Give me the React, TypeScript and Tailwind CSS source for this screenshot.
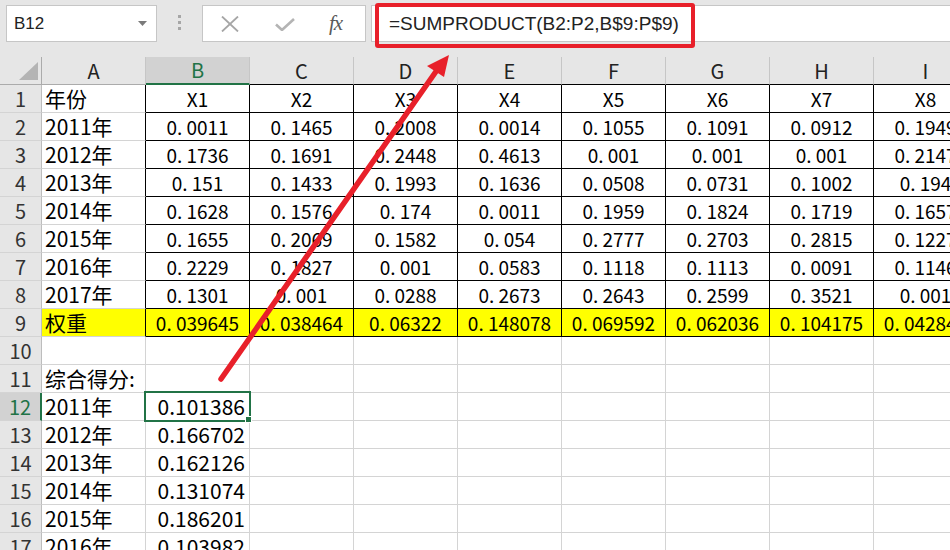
import React from "react";

const COLS = ["A", "B", "C", "D", "E", "F", "G", "H", "I"];

const ROWS: string[][] = [
  ["年份", "X1", "X2", "X3", "X4", "X5", "X6", "X7", "X8"],
  ["2011年", "0.0011", "0.1465", "0.2008", "0.0014", "0.1055", "0.1091", "0.0912", "0.1949"],
  ["2012年", "0.1736", "0.1691", "0.2448", "0.4613", "0.001", "0.001", "0.001", "0.2147"],
  ["2013年", "0.151", "0.1433", "0.1993", "0.1636", "0.0508", "0.0731", "0.1002", "0.194"],
  ["2014年", "0.1628", "0.1576", "0.174", "0.0011", "0.1959", "0.1824", "0.1719", "0.1657"],
  ["2015年", "0.1655", "0.2069", "0.1582", "0.054", "0.2777", "0.2703", "0.2815", "0.1227"],
  ["2016年", "0.2229", "0.1827", "0.001", "0.0583", "0.1118", "0.1113", "0.0091", "0.1146"],
  ["2017年", "0.1301", "0.001", "0.0288", "0.2673", "0.2643", "0.2599", "0.3521", "0.001"],
  ["权重", "0.039645", "0.038464", "0.06322", "0.148078", "0.069592", "0.062036", "0.104175", "0.042848"],
  ["", "", "", "", "", "", "", "", ""],
  ["综合得分:", "", "", "", "", "", "", "", ""],
  ["2011年", "0.101386", "", "", "", "", "", "", ""],
  ["2012年", "0.166702", "", "", "", "", "", "", ""],
  ["2013年", "0.162126", "", "", "", "", "", "", ""],
  ["2014年", "0.131074", "", "", "", "", "", "", ""],
  ["2015年", "0.186201", "", "", "", "", "", "", ""],
  ["2016年", "0.103982", "", "", "", "", "", "", ""],
];

function Wide({ v }: { v: string }) {
  const i = v.indexOf(".");
  if (i < 0) return <>{v}</>;
  return (
    <>
      {v.slice(0, i)}
      <span className="inline-block w-[0.5em]">.</span>
      {v.slice(i + 1)}
    </>
  );
}

function cellClass(r: number, c: number): string {
  const inTable = r >= 1 && r <= 9 && c >= 1;
  const yellow = r === 9;
  let cls = "w-[104px] h-[28px] shrink-0 flex items-center border-r border-b ";
  if (inTable) {
    cls += "border-black justify-center text-[19px] ";
  } else if (c === 0 && r >= 1 && r <= 9) {
    cls += "border-r-black border-b-[#d4d4d4] justify-start pl-[3px] text-[21px] ";
  } else if (c === 0) {
    cls += "border-[#d4d4d4] justify-start pl-[3px] text-[21px] ";
  } else {
    cls += "border-[#d4d4d4] justify-end pr-[4px] text-[21px] ";
  }
  cls += yellow ? "bg-[#ffff00]" : "bg-white";
  return cls;
}

export default function App() {
  return (
    <div className="relative w-[950px] h-[550px] overflow-hidden bg-white text-black font-['Noto_Sans_CJK_SC',sans-serif]">
      {/* Top formula area */}
      <div className="h-[57px] bg-[#e6e6e6] flex items-start pt-[5px]">
        <div className="ml-[6px] w-[151px] h-[37px] bg-white border border-[#c6c6c6] flex items-center justify-between pl-[7px] pr-[9px]">
          <span className="text-[17px] leading-none text-[#222] font-['Liberation_Sans',sans-serif]">B12</span>
          <svg width="9" height="5" viewBox="0 0 9 5">
            <polygon points="0,0 9,0 4.5,5" fill="#7a7a7a" />
          </svg>
        </div>
        <div className="ml-[21px] mt-[10px] flex flex-col gap-[3px]">
          <div className="w-[3px] h-[3px] bg-[#a6a6a6]" />
          <div className="w-[3px] h-[3px] bg-[#a6a6a6]" />
          <div className="w-[3px] h-[3px] bg-[#a6a6a6]" />
        </div>
        <div className="ml-[21px] w-[164px] h-[37px] bg-white border border-[#c6c6c6] flex items-center">
          <svg className="ml-[18px]" width="18" height="16" viewBox="0 0 18 16">
            <path d="M1 0.5 L17 15.5 M17 0.5 L1 15.5" stroke="#a6a6a6" strokeWidth="1.8" fill="none" />
          </svg>
          <svg className="ml-[36px] mt-[2px]" width="20" height="13" viewBox="0 0 20 13">
            <path d="M1 6.5 L7 12 L19 1" stroke="#b4b4b4" strokeWidth="2.6" fill="none" />
          </svg>
          <span className="ml-[34px] text-[21px] leading-none italic text-[#5a5a5a] font-['Liberation_Serif',serif] tracking-[-1px]">
            fx
          </span>
        </div>
        <div className="ml-[5px] flex-1 h-[37px] bg-white border border-r-0 border-[#c6c6c6] flex items-center pl-[17px]">
          <span className="text-[19px] leading-none text-[#222] font-['Liberation_Sans',sans-serif]">
            =SUMPRODUCT(B2:P2,B$9:P$9)
          </span>
        </div>
      </div>

      {/* Column headers */}
      <div className="flex h-[28px] bg-[#e6e6e6]">
        <div className="relative w-[42px] h-[28px] shrink-0 border-r border-b border-[#ababab]">
          <svg className="absolute left-0 top-0" width="42" height="28" viewBox="0 0 42 28">
            <polygon points="38,5 38,23 19,23" fill="#b4b4b4" />
          </svg>
        </div>
        {COLS.map((c, i) => (
          <div
            key={c}
            className={
              i === 1
                ? "w-[104px] h-[28px] shrink-0 flex items-center justify-center bg-[#d2d2d2] border-r border-r-[#c6c6c6] border-b-2 border-b-[#217346] text-[#217346] text-[20px]"
                : i === 0
                ? "w-[104px] h-[28px] shrink-0 flex items-center justify-center border-r border-r-[#c6c6c6] border-b border-b-[#ababab] text-[#222] text-[20px]"
                : "w-[104px] h-[28px] shrink-0 flex items-center justify-center border-r border-r-[#c6c6c6] border-b border-b-black text-[#222] text-[20px]"
            }
          >
            {c}
          </div>
        ))}
      </div>

      {/* Rows */}
      {ROWS.map((row, r) => (
        <div key={r} className="flex h-[28px]">
          <div
            className={
              r === 11
                ? "w-[42px] h-[28px] shrink-0 flex items-center justify-center bg-[#d2d2d2] border-r-2 border-r-[#217346] border-b border-b-[#d4d4d4] text-[#217346] text-[20px]"
                : "w-[42px] h-[28px] shrink-0 flex items-center justify-center bg-[#e6e6e6] border-r border-r-[#bdbdbd] border-b border-b-[#d4d4d4] text-[#333] text-[20px]"
            }
          >
            {r + 1}
          </div>
          {row.map((v, c) => (
            <div key={c} className={cellClass(r + 1, c)}>
              <span className="leading-none whitespace-nowrap">
                {r + 1 >= 1 && r + 1 <= 9 && c >= 1 ? <Wide v={v} /> : v}
              </span>
            </div>
          ))}
        </div>
      ))}

      {/* Selected cell B12 */}
      <div className="absolute left-[144px] top-[391px] w-[107px] h-[31px] border-2 border-[#217346] pointer-events-none" />
      <div className="absolute left-[245px] top-[416px] w-[7px] h-[7px] bg-[#217346] border border-white pointer-events-none" />

      {/* Red highlight box */}
      <div className="absolute left-[375px] top-[3px] w-[320px] h-[45px] border-4 border-[#e8202a] rounded-[3px] pointer-events-none" />

      {/* Red arrow */}
      <svg className="absolute left-0 top-0 pointer-events-none" width="950" height="550" viewBox="0 0 950 550">
        <line x1="221" y1="379" x2="437" y2="70" stroke="#e8202a" strokeWidth="5.5" strokeLinecap="round" />
        <polygon points="449,55 427,66 444,77" fill="#e8202a" />
      </svg>
    </div>
  );
}
